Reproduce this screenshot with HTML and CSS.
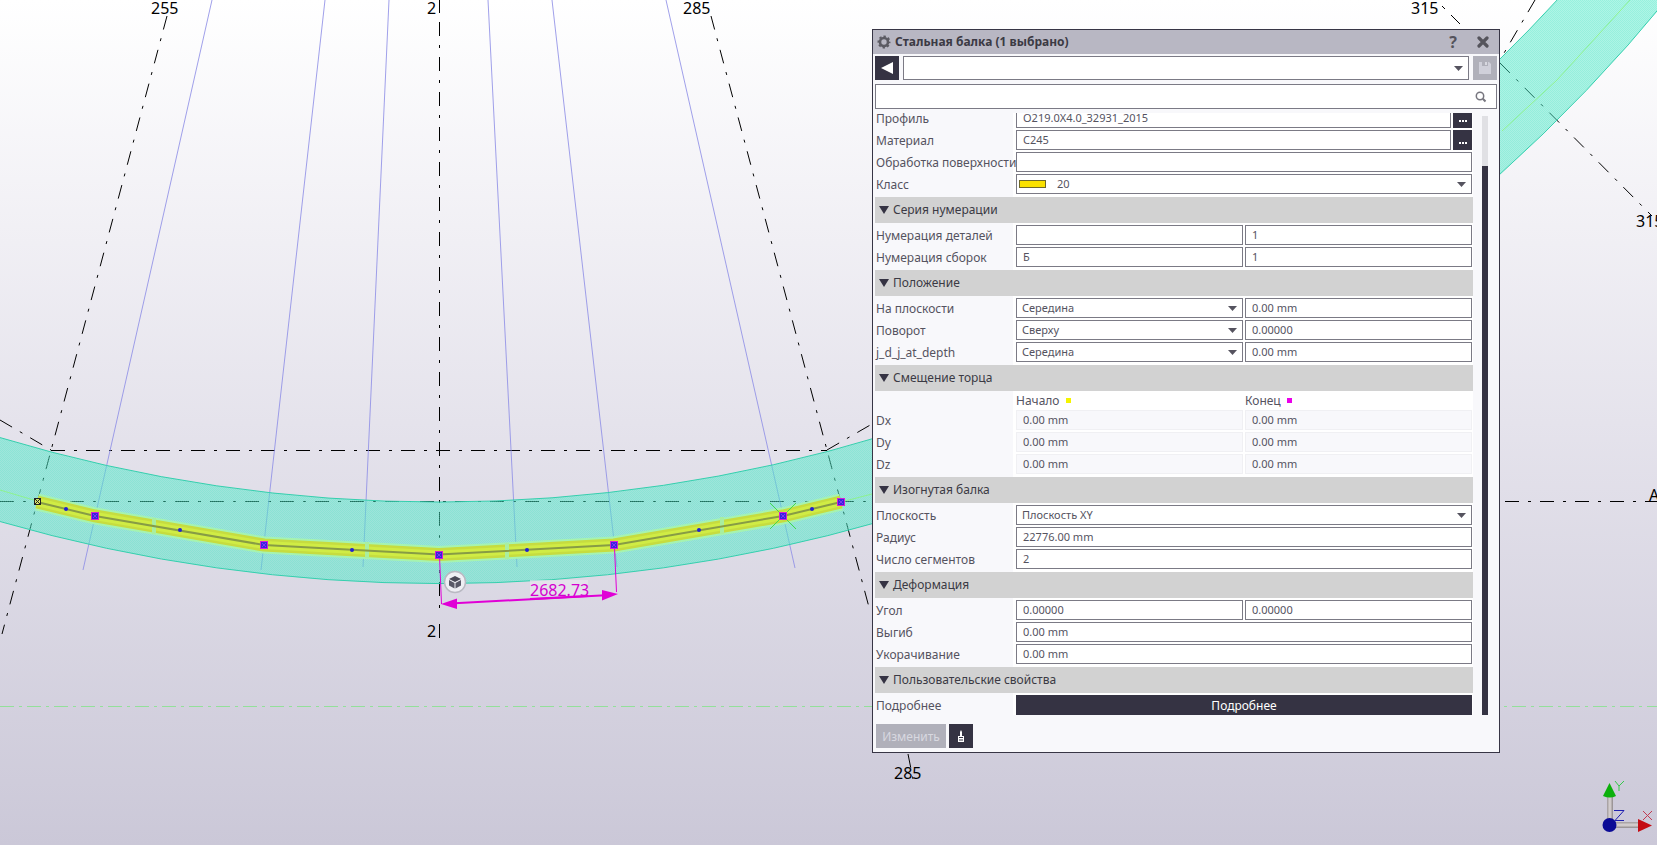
FILE: index.html
```html
<!DOCTYPE html>
<html lang="ru">
<head>
<meta charset="utf-8">
<title>Стальная балка</title>
<link rel="stylesheet" href="styles.css">
</head>
<body>
<main class="viewport">
  <svg class="scene" viewBox="0 0 1657 845" preserveAspectRatio="xMinYMin slice" aria-label="Вид модели">
    <defs>
      <pattern id="hatch" width="2" height="2" patternUnits="userSpaceOnUse">
        <rect width="2" height="2" fill="#50e8c8" opacity=".46"/>
        <rect width="1" height="1" fill="#50e8c8" opacity=".25"/>
        <rect x="1" y="1" width="1" height="1" fill="#50e8c8" opacity=".25"/>
      </pattern>
      <linearGradient id="shaftV"><stop offset="0" stop-color="#a09a9c"/><stop offset=".5" stop-color="#dcd6d6"/><stop offset="1" stop-color="#8f898b"/></linearGradient>
      <linearGradient id="shaftH" x2="0" y2="1"><stop offset="0" stop-color="#a09a9c"/><stop offset=".5" stop-color="#dcd6d6"/><stop offset="1" stop-color="#8f898b"/></linearGradient>
      <g id="handle"><rect x="-4" y="-4" width="8" height="8" fill="#d41fd6"/><rect x="-3" y="-3" width="6" height="6" fill="#3a1fe0"/><path d="M-2-2L2 2M2-2L-2 2" stroke="#7a3bf0"/></g>
    </defs>

    <g class="axis-line">
      <path d="M167 16L2 634"/>
      <path d="M711 16L870 611"/>
      <path d="M908 754L913 779"/>
      <path d="M439.500 22V617"/>
      <path d="M51 450.500H827"/>
      <path d="M0 501.500H1657"/>
      <path d="M0 420L51 450"/>
      <path d="M827 450L872 424"/>
      <path d="M1442 6L1445 9M1451 15L1460 24"/>
      <path d="M1535 0L1500 60"/>
      <path d="M1500 63L1652 216"/>
    </g>
    <path d="M439.500 0V13M439.500 624V638" stroke="#000"/>
    <g class="guide">
      <path d="M212 0L83 570M325 0L261 570M389 0L363 567M488 0L517 567M552 0L617 567M666 0L795 568"/>
    </g>
    <path class="ground" d="M0 706.500H1657"/>

    <path class="band" d="M-2 437A1523 1523 0 0 0 882 436V521A1592 1592 0 0 1 -2 521Z"/>
    <path class="band" d="M1498 61A1523 1523 0 0 0 1559 -2H1668A1592 1592 0 0 1 1498 176Z"/>
    <path d="M1502 131L1557 80L1630 0" class="core"/>
    <path d="M0 490L37 501M841 502L872 494" class="core"/>

    <g class="beam">
      <path class="beam-glow" d="M37 502L95 516L264 545L439 554.500L614 545L783 516L841 502"/>
      <path class="beam-edge" d="M37 502L95 516L264 545L439 554.500L614 545L783 516L841 502"/>
      <path class="beam-fill" d="M37 502L95 516L264 545L439 554.500L614 545L783 516L841 502"/>
      <path class="joint" d="M154 518V534M367 542V558M507 543V559M722 517V534"/>
      <path class="beam-axis" d="M37 502L95 516L264 545L439 554.500L614 545L783 516L841 502"/>
    </g>
    <path d="M770 503L796 529M796 503L770 529" stroke="#43d94c"/>
    <g fill="#2222cf">
      <circle cx="66" cy="509" r="2"/><circle cx="180" cy="530" r="2"/><circle cx="352" cy="550" r="2"/>
      <circle cx="527" cy="550" r="2"/><circle cx="699" cy="530" r="2"/><circle cx="812" cy="509" r="2"/>
    </g>
    <g stroke="#e000d6" fill="#e000d6">
      <path d="M439.500 556L441.500 604M614.500 548L616.500 592" fill="none"/>
      <path class="dim-line" d="M450 603.500L610 595"/>
      <path d="M441 604L457 598.500V609ZM618 594L602 590V600.500Z" stroke="none"/>
    </g>
    <rect x="530" y="580" width="58" height="15" fill="#e8e6ee" opacity=".7"/>
    <text class="dim-text" x="530" y="596">2682.73</text>
    <path class="dim-line" d="M530 599L588 596" stroke="#e000d6"/>
    <use href="#handle" x="95" y="516"/><use href="#handle" x="264" y="545"/><use href="#handle" x="439" y="555"/>
    <use href="#handle" x="614" y="545"/><use href="#handle" x="783" y="516"/><use href="#handle" x="841" y="502"/>
    <rect x="34.500" y="498.500" width="6" height="6" fill="#d9e36b" stroke="#222"/><path d="M35 499L40 504M40 499L35 504" stroke="#222"/>

    <circle cx="455" cy="582" r="10.500" fill="#efeff4" stroke="#b9b9c2" stroke-width="1.500"/>
    <path d="M455 576L461 579L455 582L449 579Z" fill="#4a4957"/>
    <path d="M449 580L454.500 583V588.500L449 585.500ZM461 580L455.500 583V588.500L461 585.500Z" fill="#5a5968"/>

    <g class="grid-label">
      <text x="151" y="14">255</text><text x="427" y="14">2</text><text x="683" y="14">285</text><text x="1411" y="14">315</text>
      <text x="427" y="637">2</text><text x="894" y="779">285</text><text x="1636" y="227">315</text><text x="1649" y="501">A</text>
    </g>

    <g>
      <rect x="1607" y="796" width="6" height="24" fill="url(#shaftV)"/>
      <rect x="1614" y="822" width="25" height="6" fill="url(#shaftH)"/>
      <path d="M1609.500 783L1616 796Q1610 799 1603 796Z" fill="#0bb00b"/>
      <path d="M1652 825.500L1638 832V819Z" fill="#c40b12"/>
      <circle cx="1609.500" cy="825" r="7" fill="#0b0b96"/>
      <path d="M1615 781L1619 786L1624 781M1619 786V791" fill="none" stroke="#35c94a"/>
      <path d="M1614 810.500H1624L1615 820.500H1624" fill="none" stroke="#2020b0"/>
      <path d="M1643 811L1652 820M1652 811L1643 820" fill="none" stroke="#c23a50"/>
    </g>
  </svg>

  <section class="panel" aria-label="Свойства">
    <header class="titlebar">
      <svg class="gear" viewBox="0 0 14 14"><circle cx="7" cy="7" r="4" fill="none" stroke="#5c5b63" stroke-width="2.600"/><circle cx="7" cy="7" r="5.600" fill="none" stroke="#5c5b63" stroke-width="1.800" stroke-dasharray="2.400 1.998" stroke-dashoffset="1.200"/></svg>
      <h1 class="title">Стальная балка (1 выбрано)</h1>
      <button class="tbtn help" aria-label="Справка">?</button>
      <button class="tbtn" aria-label="Закрыть"><svg viewBox="0 0 12 12" width="12" height="12"><path d="M2 2L10 10M10 2L2 10" stroke="#55545c" stroke-width="3.200" stroke-linecap="round"/></svg></button>
    </header>
    <div class="preset">
      <button class="square" aria-label="Назад"><svg viewBox="0 0 24 24"><path d="M6 12L18 6V18Z" fill="#fff"/></svg></button>
      <div class="combo"><select aria-label="Набор свойств"><option></option></select></div>
      <button class="square off" aria-label="Сохранить" disabled><svg viewBox="0 0 24 24"><path d="M6 6H16L18 8V18H6Z" fill="#d0d0da"/><path d="M9 6H15V10H9Z" fill="#b0b0ba"/><path d="M12 6H14V9H12Z" fill="#d8d8e0"/></svg></button>
    </div>
    <div class="search"><input type="text" aria-label="Поиск"><svg viewBox="0 0 12 12"><circle cx="5" cy="5" r="3.700" fill="none" stroke="#77767f" stroke-width="1.500"/><path d="M7.800 7.800L10.500 10.500" stroke="#77767f" stroke-width="2"/></svg></div>

    <div class="body">
      <div class="list">
        <div class="rows">
          <div class="row"><label for="profile">Профиль</label><div class="pick"><input type="text" id="profile" value="O219.0X4.0_32931_2015"><button class="more" aria-label="Выбрать профиль"><i></i><i></i><i></i></button></div></div>
          <div class="row"><label for="material">Материал</label><div class="pick"><input type="text" id="material" value="C245"><button class="more" aria-label="Выбрать материал"><i></i><i></i><i></i></button></div></div>
          <div class="row"><label for="finish">Обработка поверхности</label><div class="one"><input type="text" id="finish"></div></div>
          <div class="row"><label for="class">Класс</label><div class="combo color"><select id="class"><option>20</option></select></div></div>
        </div>
        <h2 class="group">Серия нумерации</h2>
        <div class="rows">
          <div class="row"><label for="part">Нумерация деталей</label><div class="two"><input type="text" id="part"><input type="text" value="1" aria-label="Начальный номер детали"></div></div>
          <div class="row"><label for="asm">Нумерация сборок</label><div class="two"><input type="text" id="asm" value="Б"><input type="text" value="1" aria-label="Начальный номер сборки"></div></div>
        </div>
        <h2 class="group">Положение</h2>
        <div class="rows">
          <div class="row"><label for="plane">На плоскости</label><div class="two"><div class="combo"><select id="plane"><option>Середина</option></select></div><input type="text" value="0.00 mm" aria-label="Смещение на плоскости"></div></div>
          <div class="row"><label for="rot">Поворот</label><div class="two"><div class="combo"><select id="rot"><option>Сверху</option></select></div><input type="text" value="0.00000" aria-label="Угол поворота"></div></div>
          <div class="row"><label for="depth">j_d_j_at_depth</label><div class="two"><div class="combo"><select id="depth"><option>Середина</option></select></div><input type="text" value="0.00 mm" aria-label="Смещение по глубине"></div></div>
        </div>
        <h2 class="group">Смещение торца</h2>
        <div class="rows">
          <div class="row heads"><span></span><div class="two"><span class="start">Начало</span><span class="end">Конец</span></div></div>
          <div class="row"><label for="dx">Dx</label><div class="two"><input type="text" disabled id="dx" value="0.00 mm"><input type="text" disabled value="0.00 mm" aria-label="Dx конец"></div></div>
          <div class="row"><label for="dy">Dy</label><div class="two"><input type="text" disabled id="dy" value="0.00 mm"><input type="text" disabled value="0.00 mm" aria-label="Dy конец"></div></div>
          <div class="row"><label for="dz">Dz</label><div class="two"><input type="text" disabled id="dz" value="0.00 mm"><input type="text" disabled value="0.00 mm" aria-label="Dz конец"></div></div>
        </div>
        <h2 class="group">Изогнутая балка</h2>
        <div class="rows">
          <div class="row"><label for="cplane">Плоскость</label><div class="combo"><select id="cplane"><option>Плоскость XY</option></select></div></div>
          <div class="row"><label for="radius">Радиус</label><div class="one"><input type="text" id="radius" value="22776.00 mm"></div></div>
          <div class="row"><label for="segs">Число сегментов</label><div class="one"><input type="text" id="segs" value="2"></div></div>
        </div>
        <h2 class="group">Деформация</h2>
        <div class="rows">
          <div class="row"><label for="angle">Угол</label><div class="two"><input type="text" id="angle" value="0.00000"><input type="text" value="0.00000" aria-label="Угол, конец"></div></div>
          <div class="row"><label for="camber">Выгиб</label><div class="one"><input type="text" id="camber" value="0.00 mm"></div></div>
          <div class="row"><label for="short">Укорачивание</label><div class="one"><input type="text" id="short" value="0.00 mm"></div></div>
        </div>
        <h2 class="group">Пользовательские свойства</h2>
        <div class="rows last">
          <div class="row"><label for="uda">Подробнее</label><button class="wide" id="uda">Подробнее</button></div>
        </div>
      </div>
      <div class="scroll"><div class="thumb"></div></div>
    </div>

    <footer class="footer">
      <button class="modify" disabled>Изменить</button>
      <button class="square" aria-label="Копировать свойства"><svg viewBox="0 0 24 24"><path d="M12 6L13 8V12H15V18H9V12H11V8Z" fill="#fff"/><path d="M10 13.500H14M10 16H14" stroke="#353343"/></svg></button>
    </footer>
  </section>
</main>
</body>
</html>
```
FILE: styles.css
```css
*, *::before, *::after { box-sizing: border-box; }
body { margin: 0; font-family: "Noto Sans", "Open Sans", sans-serif; font-size: 12px; color: #55535f; }
button, input, select { font: inherit; color: inherit; margin: 0; border-radius: 0; }
button { border: 0; padding: 0; }

.viewport { position: relative; min-height: 100vh; overflow: hidden; background: linear-gradient(#fff, #e5e3ec 50%, #cbc8d8); }
.scene { position: absolute; inset: 0; width: 100%; height: 100%; }
.axis-line path { stroke: #000; stroke-dasharray: 14 9 3 9; fill: none; }
.guide path { stroke: #8f8fe6; fill: none; opacity: .85; }
.ground { stroke: #93e09a; stroke-dasharray: 14 5 3 5; }
.band { fill: url(#hatch); stroke: #35cfae; }
.core { fill: none; stroke: #8df28f; stroke-width: 1; }
.beam path { fill: none; }
.beam .beam-glow { stroke: #a6f3b0; stroke-width: 17; }
.beam .beam-edge { stroke: #c6dc40; stroke-width: 13; }
.beam .beam-fill { stroke: #d0ec44; stroke-width: 8; }
.beam .beam-axis { stroke: #879c45; stroke-width: 2; }
.beam .joint { stroke: #a9eea0; stroke-width: 4; }
.dim-line { stroke-width: 2; }
.dim-text, .grid-label { font-size: 16px; }
.dim-text { fill: #d400cf; }
.grid-label { fill: #000; }

.panel { position: absolute; left: 872px; top: 29px; width: 628px; border: 1px solid #373545; background: #f8f8fb; }
.titlebar { display: flex; align-items: center; height: 24px; padding: 0 8px 0 4px; background: #b8b7c3; }
.gear { width: 14px; height: 14px; }
.title { flex: 1; margin: 0 0 0 4px; font-size: 12px; line-height: 24px; font-weight: 700; color: #3b3a44; }
.tbtn { display: flex; align-items: center; justify-content: center; width: 16px; height: 24px; margin-left: 14px; background: none; color: #55545c; }
.help { font-size: 16px; font-weight: 700; line-height: 24px; }

.preset { display: flex; gap: 4px; padding: 2px; }
.preset .combo { flex: 1; height: 24px; }
.square { width: 24px; height: 24px; background: #353343; }
.square svg { display: block; width: 24px; height: 24px; }
.off { background: #b0b0ba; }

.search { display: flex; align-items: center; height: 25px; margin: 2px 2px 0; padding-right: 9px; border: 1px solid #7b7a85; background: #fff; }
.search input { flex: 1; border: 0; background: none; outline: 0; }
.search svg { width: 12px; height: 12px; }

.body { display: flex; height: 602px; margin: 4px 11px 0 2px; }
.list { flex: 1; display: flex; flex-direction: column; justify-content: flex-end; overflow: hidden; background: linear-gradient(90deg, #f8f8fb 138px, #fff 138px); }
.scroll { width: 6px; margin: 3px 0 0 9px; padding-top: 50px; background: #e0e0e4; }
.thumb { height: 100%; background: #353343; }
.rows { display: flex; flex-direction: column; gap: 2px; padding: 2px 1px 3px; }
.last { padding-bottom: 0; }
.group { flex: none; display: flex; align-items: center; gap: 4px; margin: 0; padding-left: 4px; height: 26px; background: #d2d2d2; font-size: 12px; font-weight: 400; line-height: 26px; color: #3b3a44; }
.group::before { content: ""; width: 10px; height: 8px; background: #353343; clip-path: polygon(0 0, 100% 0, 50% 100%); }
.row { display: grid; grid-template: 20px / 140px 1fr; }
.row label { line-height: 22px; white-space: nowrap; }
.row.heads { grid-template-rows: 15px; line-height: 15px; }

.one, .two, .pick { display: grid; gap: 2px; min-width: 0; }
.two { grid-template-columns: 1fr 1fr; }
.pick { grid-template-columns: 1fr 19px; }
.row input, .combo select { width: 100%; min-width: 0; height: 100%; border: 1px solid #7b7a85; background: #fff; font-size: 11px; outline: 0; }
.row input { padding: 0 6px 2px; }
.row input:disabled { border-color: #f0f0f3; background: #f8f8fb; color: #55535f; }
.combo { position: relative; min-width: 0; }
.combo select { display: block; appearance: none; padding: 0 5px 2px; }
.combo::after { content: ""; position: absolute; right: 6px; top: calc(50% - 2px); width: 9px; height: 5px; background: #55535f; clip-path: polygon(0 0, 100% 0, 50% 100%); pointer-events: none; }
.color select { padding-left: 40px; }
.color::before { content: ""; position: absolute; left: 3px; top: 6px; width: 27px; height: 8px; border: 1px solid #6e682a; background: #fae100; }
.more { display: flex; align-items: center; justify-content: center; gap: 1px; padding-top: 5px; background: #353343; }
.more i { width: 2px; height: 2px; background: #fff; }
.start::after, .end::after { content: ""; display: inline-block; width: 5px; height: 5px; margin: 0 0 2px 6px; background: #f4f400; }
.end::after { background: #ea00ea; }
.wide { background: #353343; color: #fff; }

.footer { display: flex; gap: 3px; padding: 9px 3px 4px; }
.modify { width: 70px; height: 24px; background: #b0b0ba; color: #d8d8e0; }
```
